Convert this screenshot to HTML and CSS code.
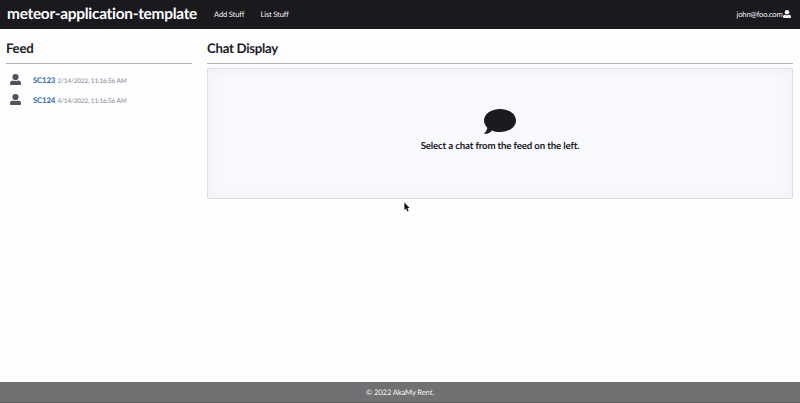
FILE: index.html
```html
<!DOCTYPE html>
<html lang="en">
<head>
<meta charset="utf-8">
<title>meteor-application-template</title>
<link rel="stylesheet" href="styles.css">
</head>
<body>
<svg class="defs" aria-hidden="true">
  <symbol id="user" viewBox="0 0 12 12"><ellipse cx="6" cy="3.4" rx="3.4" ry="3.4"/><path d="M3 7Q6 8.5 9 7Q12 7.3 12 9.6V10.8Q12 12 11 12H1Q0 12 0 10.8V9.6Q0 7.3 3 7Z"/></symbol>
</svg>
<nav class="navbar">
  <h1 class="brand"><span>meteor-application-template</span></h1>
  <a class="nav-add"><span>Add Stuff</span></a>
  <a class="nav-list"><span>List Stuff</span></a>
  <div class="account"><span>john@foo.com</span><svg><use href="#user"/></svg></div>
</nav>
<main class="content">
  <section class="feed">
    <h2>Feed</h2>
    <div class="event"><svg><use href="#user"/></svg><a>SC123</a><time>2/14/2022, 11:16:56 AM</time></div>
    <div class="event"><svg><use href="#user"/></svg><a>SC124</a><time>4/14/2022, 11:16:56 AM</time></div>
  </section>
  <section class="chat">
    <h2>Chat Display</h2>
    <div class="placeholder">
      <svg class="bubble" viewBox="0 0 32 25"><path d="M16 0C25 0 32 5 32 11.5S25 23 16 23C13 23 10.2 22.5 7.8 21.4C6.3 23.5 3.8 24.9 .5 24.8C.1 24.8 .1 24.4 .4 24.1C2 22.5 3.2 20.7 3.3 18.7C1.2 16.7 0 14.2 0 11.5C0 5 7 0 16 0Z"/></svg>
      <p>Select a chat from the feed on the left.</p>
    </div>
  </section>
</main>
<footer class="footer">© 2022 AkaMy Rent.</footer>
<svg class="cursor" viewBox="0 0 6 10"><path d="M.4.4V8L2.1 6.4L3.4 9.4L4.7 8.8L3.4 6H5.6Z"/></svg>
</body>
</html>
```
FILE: styles.css
```css
* { box-sizing: border-box; }
body {
  margin: 0;
  height: 403px;
  display: flex;
  flex-direction: column;
  overflow: hidden;
  background: #fefdff;
  color: #1b1b1f;
  font: 7.6px/10px Lato, "Liberation Sans", sans-serif;
  letter-spacing: -.17px;
  text-rendering: geometricPrecision;
  font-variant-ligatures: none;
}
h1, h2, p { margin: 0; }
.defs { position: absolute; width: 0; height: 0; }
.navbar {
  height: 29px;
  flex: none;
  display: flex;
  align-items: center;
  padding: 0 9px 0 7px;
  background: #1a191e;
  color: #f4f4f4;
  white-space: nowrap;
}
.brand { width: 207px; font-size: 15.4px; letter-spacing: -.26px; line-height: 20px; padding-bottom: 2px; color: #fff; }
.nav-add { width: 46.5px; }
.nav-add, .nav-list, .account span { padding-bottom: 2px; }
.account { margin-left: auto; display: flex; align-items: center; gap: .5px; }
.account svg { width: 8px; height: 8px; margin-bottom: 1px; fill: currentColor; }
.content { flex: 1; display: flex; gap: 15px; padding: 10px 7px 0 6px; }
.feed { width: 186px; }
.chat { flex: 1; }
h2 {
  height: 25px;
  margin-bottom: 6px;
  border-bottom: 1px solid #b4b3b6;
  font-size: 13.2px;
  letter-spacing: -.26px;
  line-height: 18px;
}
.chat h2 { margin-bottom: 4px; }
.event { height: 20px; display: flex; align-items: center; padding-left: 4px; white-space: nowrap; }
.event svg { width: 11px; height: 11px; margin: 0 12px 1px 0; fill: #555357; }
.event a { width: 24.5px; color: #286caf; font-size: 7.8px; font-weight: 700; }
.event time { padding-top: 3px; color: #8a898d; font-size: 6.5px; letter-spacing: -.19px; }
.placeholder {
  height: 131px;
  display: flex;
  flex-direction: column;
  align-items: center;
  padding-top: 40px;
  border: 1px solid #dcdddf;
  border-radius: 2px;
  background: #f8f9fc;
  box-shadow: inset 0 1px 14px rgba(34, 36, 38, .045);
}
.bubble { width: 32px; height: 25px; fill: #1b1b1f; }
.placeholder p { margin-top: 5px; font-size: 9.7px; letter-spacing: -.155px; line-height: 14px; font-weight: 700; white-space: nowrap; }
.footer {
  flex: none;
  height: 21px;
  background: #717072;
  border-bottom: 1px solid #5b5a5c;
  color: #f5f5f5;
  text-align: center;
  letter-spacing: -.12px;
  line-height: 20px;
}
.cursor { position: absolute; left: 404px; top: 202px; width: 6px; height: 10px; fill: #111; }
```
